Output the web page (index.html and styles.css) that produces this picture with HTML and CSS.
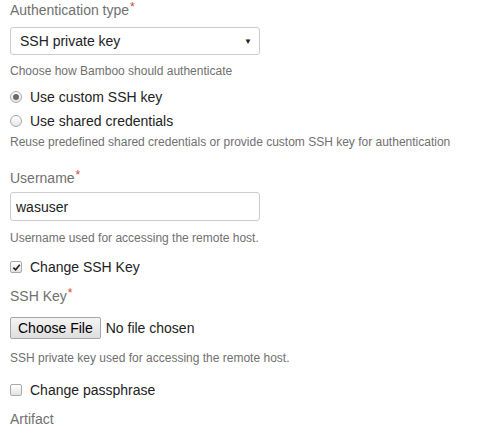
FILE: index.html
```html
<!DOCTYPE html>
<html>
<head>
<meta charset="utf-8">
<link rel="stylesheet" href="styles.css">
</head>
<body>
<form class="form">
  <div class="field">
    <label class="label">Authentication type<span class="req">*</span></label>
    <div class="select">
      <span>SSH private key</span>
      <span class="arrow">&#9660;</span>
    </div>
    <div class="help">Choose how Bamboo should authenticate</div>
  </div>
  <div class="choices">
    <div class="choice"><span class="radio checked"></span><span>Use custom SSH key</span></div>
    <div class="choice"><span class="radio"></span><span>Use shared credentials</span></div>
    <div class="help">Reuse predefined shared credentials or provide custom SSH key for authentication</div>
  </div>
  <div class="field">
    <label class="label">Username<span class="req">*</span></label>
    <div class="text">wasuser</div>
    <div class="help text-help">Username used for accessing the remote host.</div>
  </div>
  <div class="choice solo"><span class="check checked"><svg viewBox="0 0 10 10" width="9" height="9"><path d="M1.5 5.2 L4 7.6 L8.6 2" fill="none" stroke="#222" stroke-width="1.8"/></svg></span><span>Change SSH Key</span></div>
  <div class="field">
    <label class="label">SSH Key<span class="req">*</span></label>
    <div class="file"><span class="btn">Choose File</span><span>No file chosen</span></div>
    <div class="help file-help">SSH private key used for accessing the remote host.</div>
  </div>
  <div class="choice solo late"><span class="check"></span><span>Change passphrase</span></div>
  <div class="field">
    <label class="label">Artifact</label>
  </div>
</form>
</body>
</html>
```
FILE: styles.css
```css
html, body { margin: 0; padding: 0; background: #fff; }
body { font-family: "Liberation Sans", Arial, sans-serif; color: #333; }
.form { padding: 0 10px; display: flex; flex-direction: column; }
.field { display: flex; flex-direction: column; }
.label { font-size: 14px; color: #707070; line-height: 20px; margin-top: 0; }
.req { color: #d04437; font-size: 12px; vertical-align: top; position: relative; top: -3px; margin-left: 1px; }
.select { margin-top: 7px; width: 250px; height: 28px; box-sizing: border-box; border: 1px solid #ccc; border-radius: 3px; display: flex; align-items: center; justify-content: space-between; padding: 0 7px 0 9px; font-size: 14px; color: #222; }
.arrow { font-size: 8px; color: #222; }
.help { font-size: 12px; color: #707070; line-height: 14px; margin-top: 9px; }
.choices { display: flex; flex-direction: column; margin-top: 7px; }
.choice { display: flex; align-items: center; gap: 8px; font-size: 14px; color: #222; height: 24px; }
.radio { width: 12px; height: 12px; box-sizing: border-box; border-radius: 50%; border: 1px solid #a9a9a9; background: linear-gradient(#fff, #e6e6e6); display: inline-flex; align-items: center; justify-content: center; }
.radio.checked::after { content: ""; width: 6px; height: 6px; border-radius: 50%; background: #6a6a6a; }
.choices .help { margin-top: 2px; }
.field + .field, .choices + .field { margin-top: 19px; }
.check { width: 12px; height: 12px; box-sizing: border-box; border-radius: 2px; border: 1px solid #a9a9a9; background: linear-gradient(#fff, #e3e3e3); display: inline-flex; align-items: center; justify-content: center; }
.solo { margin-top: 10px; }
.solo.late { margin-top: 13px; }
.solo + .field { margin-top: 7px; }
.text { margin-top: 4px; width: 250px; height: 29px; box-sizing: border-box; border: 1px solid #ccc; border-radius: 3px; display: flex; align-items: center; padding: 0 5px; font-size: 14px; color: #222; }
.text-help { margin-top: 10px; }
.file { margin-top: 11px; display: flex; align-items: center; gap: 5px; font-size: 14px; color: #222; }
.file-help { margin-top: 12px; }
.btn { height: 22px; box-sizing: border-box; padding: 0 7px; border: 1px solid #a6a6a6; border-radius: 2px; background: linear-gradient(#f4f4f4, #dedede); display: inline-flex; align-items: center; color: #000; }
```
